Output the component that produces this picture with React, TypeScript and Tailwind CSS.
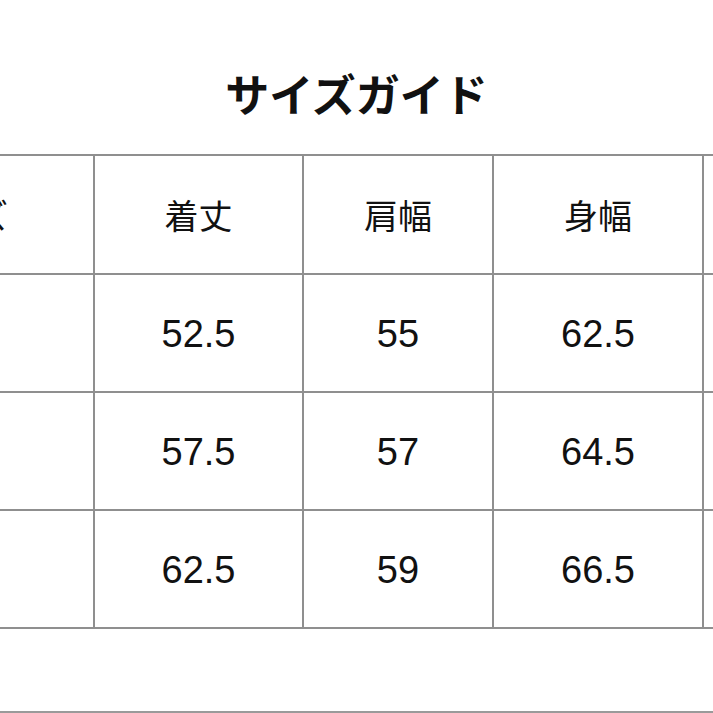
import React from "react";

const jp = { fontFamily: '"Noto Sans CJK JP", "Noto Sans", sans-serif' };
const num = { fontFamily: '"Liberation Sans", Arial, sans-serif' };

const headers = ["サイズ", "着丈", "肩幅", "身幅", "袖丈"];
const rows = [
  ["S", "52.5", "55", "62.5", "20"],
  ["M", "57.5", "57", "64.5", "21"],
  ["L", "62.5", "59", "66.5", "22"],
];

export default function App() {
  return (
    <div className="w-[713px] h-[713px] overflow-hidden bg-white flex flex-col text-[#111]">
      <div className="h-[154px] shrink-0 flex justify-center pt-[71px]">
        <h1 className="text-[44px] leading-[44px] font-bold" style={jp}>
          サイズガイド
        </h1>
      </div>
      <div className="ml-[-180px] w-[1100px] shrink-0">
        <div className="grid grid-cols-[271px_207px_188px_208px_300px] grid-rows-[117px_116px_116px_116px] gap-[2px] bg-[#8f8f8f] p-[2px] w-max">
          {headers.map((h) => (
            <div key={h} className="bg-white flex items-center justify-center text-[34px]" style={jp}>
              {h}
            </div>
          ))}
          {rows.map((r, i) =>
            r.map((c, j) => (
              <div
                key={`${i}-${j}`}
                className="bg-white flex items-center justify-center pt-[2px] text-[38px]"
                style={num}
              >
                {c}
              </div>
            ))
          )}
        </div>
      </div>
      <div className="flex-1" />
      <div className="h-[2px] bg-[#9a9a9a] shrink-0" />
    </div>
  );
}
